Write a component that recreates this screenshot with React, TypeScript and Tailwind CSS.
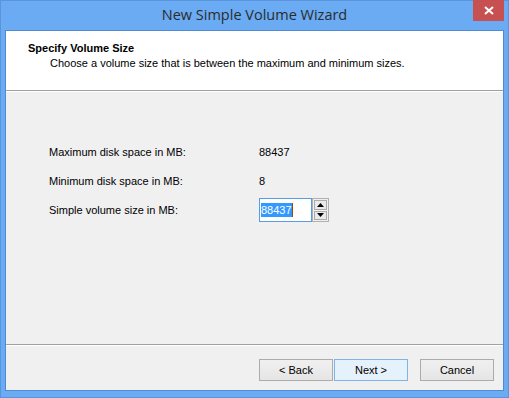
import type { FC } from "react";

const ui = { fontFamily: '"Liberation Sans", Arial, sans-serif' };

const Row: FC<{ label: string; children: React.ReactNode }> = ({ label, children }) => (
  <div className="flex items-center h-[24px]">
    <span className="w-[210px] text-[11px] text-[#000]">{label}</span>
    {children}
  </div>
);

const Btn: FC<{ text: string; def?: boolean }> = ({ text, def }) => (
  <button
    className={
      "w-[74px] h-[22px] text-[11px] text-black border " +
      (def ? "bg-[#e5f1fb] border-[#7eb4ea]" : "bg-gradient-to-b from-[#f0f0f0] to-[#e5e5e5] border-[#acacac]")
    }
  >
    {text}
  </button>
);

export default function App() {
  return (
    <div className="w-[509px] h-[398px] bg-[#6aabf3] border border-[#5a95dc] flex flex-col" style={ui}>
      {/* title bar */}
      <div className="h-[29px] flex relative">
        <div className="flex-1 text-center pt-[3px] text-[14.5px] text-[#2b2b2b]" style={{ fontFamily: '"Open Sans", "Noto Sans", sans-serif' }}>
          New Simple Volume Wizard
        </div>
        <div className="absolute right-[4px] top-[-1px] w-[31px] h-[21px] bg-[#c75050] flex items-center justify-center">
          <svg width="10" height="9" viewBox="0 0 10 9">
            <path d="M1 1 L9 8 M9 1 L1 8" stroke="white" strokeWidth="2" />
          </svg>
        </div>
      </div>

      {/* client */}
      <div className="mx-[4px] h-[361px] border border-[#4f8ad2] bg-[#f0f0f0] flex flex-col">
        <div className="h-[59px] bg-white pt-[10px]">
          <div className="pl-[22px] text-[11px] font-bold text-black leading-[14px]">Specify Volume Size</div>
          <div className="pl-[44px] text-[11px] text-black leading-[14px] mt-[1px]">
            Choose a volume size that is between the maximum and minimum sizes.
          </div>
        </div>
        <div className="h-[2px] border-t border-[#a0a0a0] border-b border-b-white" />
        <div className="h-[252px] pl-[43px] pt-[48px] flex flex-col gap-[5px]">
          <Row label="Maximum disk space in MB:">
            <span className="text-[11px]">88437</span>
          </Row>
          <Row label="Minimum disk space in MB:">
            <span className="text-[11px]">8</span>
          </Row>
          <Row label="Simple volume size in MB:">
            <div className="flex">
              <div className="w-[53px] h-[24px] border border-[#569de5] bg-white flex items-center pl-[1px]">
                <span className="text-[11px] bg-[#3399ff] text-white leading-[14px]">88437</span>
                <span className="w-[1px] h-[14px] bg-[#9a4a00]" />
              </div>
              <div className="w-[17px] h-[24px] border border-[#b0b0b0] bg-[#f0f0f0] flex flex-col p-[1px] gap-[1px]">
                <div className="flex-1 border border-[#acacac] bg-[#eaeaea] flex items-center justify-center">
                  <svg width="7" height="4" viewBox="0 0 7 4"><path d="M3.5 0 L7 4 L0 4 Z" fill="black" /></svg>
                </div>
                <div className="flex-1 border border-[#acacac] bg-[#eaeaea] flex items-center justify-center">
                  <svg width="7" height="4" viewBox="0 0 7 4"><path d="M0 0 L7 0 L3.5 4 Z" fill="black" /></svg>
                </div>
              </div>
            </div>
          </Row>
        </div>
        <div className="h-[2px] border-t border-[#a0a0a0] border-b border-b-white" />
        <div className="flex-1 flex items-start pt-[13px] pl-[253px] gap-[1px]">
          <Btn text="< Back" />
          <Btn text="Next >" def />
          <div className="w-[10px]" />
          <Btn text="Cancel" />
        </div>
      </div>
    </div>
  );
}
